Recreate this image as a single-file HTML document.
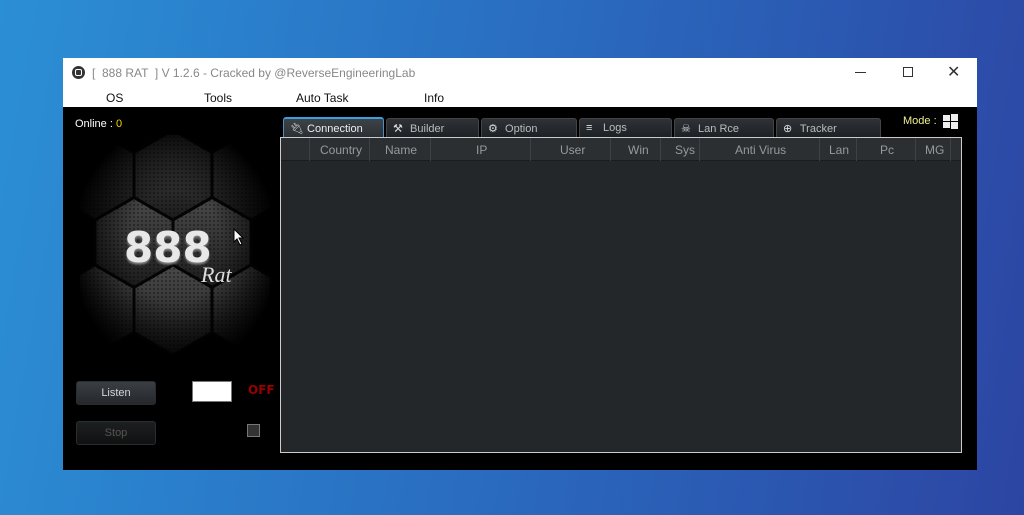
<!DOCTYPE html>
<html><head><meta charset="utf-8"><style>
*{margin:0;padding:0;box-sizing:border-box}
body{width:1024px;height:515px;overflow:hidden;background:linear-gradient(100deg,#2b8fd5 0%,#2a6cc0 50%,#2c45a3 100%);font-family:"Liberation Sans",sans-serif;position:relative}
.win{position:absolute;left:63px;top:58px;width:914px;height:412px;background:#000}
.title{position:absolute;left:0;top:0;width:914px;height:30px;background:#fff;font-size:12px;color:#888}
.menu{position:absolute;left:0;top:30px;width:914px;height:19px;background:#fff;font-size:12px;color:#111}
.menu span{position:absolute;top:3px}
.t{position:absolute;font-size:11px;color:#ddd;white-space:nowrap}
.tab{position:absolute;top:60px;height:20px;background:linear-gradient(#2e3337,#1d2023);border:1px solid #444;border-bottom:none;border-radius:3px 3px 0 0;font-size:11px;color:#bbb;padding:3px 0 0 6px}
.tab b{display:inline-block;width:14px;color:#ddd;font-weight:normal}
.frame{position:absolute;left:217px;top:79px;width:682px;height:316px;border:1px solid #ccc;background:#23272a}
.hdr{position:absolute;left:0;top:0;width:680px;height:23px;background:#2b2f32;border-bottom:1px solid #1a1c1e}
.hdr span{position:absolute;top:5px;font-size:12px;color:#999}
.sep{position:absolute;top:0;width:1px;height:23px;background:#3d4246}
.btn{position:absolute;width:80px;height:24px;border:1px solid #2a2d30;border-radius:3px;font-size:11px;text-align:center;line-height:22px}
</style></head><body>
<div class="win">
 <div class="title">
  <div style="position:absolute;left:9px;top:8px;width:13px;height:13px;border-radius:50%;background:#333"><div style="position:absolute;left:3px;top:3px;width:7px;height:7px;border:1.5px solid #fff;border-radius:2px"></div></div>
  <div style="position:absolute;left:29px;top:8px">[ &nbsp;888 RAT &nbsp;] V 1.2.6 - Cracked by @ReverseEngineeringLab</div>
  <div style="position:absolute;left:792px;top:14px;width:11px;height:1px;background:#333"></div>
  <div style="position:absolute;left:840px;top:9px;width:10px;height:10px;border:1px solid #333"></div>
  <div style="position:absolute;left:884px;top:4px;font-size:16px;color:#333">✕</div>
 </div>
 <div class="menu"><span style="left:43px">OS</span><span style="left:141px">Tools</span><span style="left:233px">Auto Task</span><span style="left:361px">Info</span></div>
 <div class="t" style="left:12px;top:60px;font-size:11px;color:#fff">Online : <span style="color:#f5d400">0</span></div>
 <div class="t" style="left:840px;top:57px;color:#f0f090">Mode :</div>
 <svg style="position:absolute;left:880px;top:56px" width="15" height="15"><rect x="0" y="1" width="7" height="6" fill="#eee"/><rect x="8" y="0" width="7" height="7" fill="#eee"/><rect x="0" y="8" width="7" height="6" fill="#eee"/><rect x="8" y="8" width="7" height="7" fill="#eee"/></svg>
 <!-- logo -->
 <div style="position:absolute;left:17px;top:77px;width:190px;height:225px;overflow:hidden;background:#000">
  <svg width="190" height="225" style="position:absolute;left:0;top:0">
   <defs>
    <linearGradient id="hg" x1="0" y1="0" x2="0" y2="1"><stop offset="0" stop-color="#4a4a4a"/><stop offset="1" stop-color="#1c1c1c"/></linearGradient>
    <radialGradient id="vg" cx="50%" cy="50%" r="55%"><stop offset="0.45" stop-color="#000" stop-opacity="0"/><stop offset="1" stop-color="#000" stop-opacity="1"/></radialGradient>
    <pattern id="dots" width="4" height="4" patternUnits="userSpaceOnUse"><circle cx="2" cy="2" r="0.9" fill="#000" opacity=".55"/></pattern>
   </defs>
   <g stroke="#050505" stroke-width="3" fill="url(#hg)">
    <path d="M93,-5 L132,17.5 L132,62.5 L93,85 L54,62.5 L54,17.5Z"/>
    <path d="M15,-5 L54,17.5 L54,62.5 L15,85 L-24,62.5 L-24,17.5Z"/>
    <path d="M171,-5 L210,17.5 L210,62.5 L171,85 L132,62.5 L132,17.5Z"/>
    <path d="M54,62.5 L93,85 L93,130 L54,152.5 L15,130 L15,85Z"/>
    <path d="M132,62.5 L171,85 L171,130 L132,152.5 L93,130 L93,85Z"/>
    <path d="M93,130 L132,152.5 L132,197.5 L93,220 L54,197.5 L54,152.5Z"/>
    <path d="M15,130 L54,152.5 L54,197.5 L15,220 L-24,197.5 L-24,152.5Z"/>
    <path d="M171,130 L210,152.5 L210,197.5 L171,220 L132,197.5 L132,152.5Z"/>
   </g>
   <rect width="190" height="225" fill="url(#dots)"/>
   <rect width="190" height="225" fill="url(#vg)"/>
  </svg>
  <div style="position:absolute;left:44px;top:88px;font-size:42px;font-weight:bold;color:#e8e8e8;letter-spacing:0px;text-shadow:0 2px 2px #888;font-family:'DejaVu Sans',sans-serif">888</div>
  <div style="position:absolute;left:121px;top:127px;font-size:22px;font-style:italic;color:#ddd;font-family:'Liberation Serif',serif">Rat</div>
 </div>
 <svg style="position:absolute;left:170px;top:170px" width="12" height="18"><path d="M1,1 L1,14 L4,11 L7,17 L9,16 L6,10 L10,10 Z" fill="#fff" stroke="#000" stroke-width="1"/></svg>
 <div class="btn" style="left:13px;top:323px;background:linear-gradient(#3a3f43,#25292c);color:#cfd6dc">Listen</div>
 <div class="btn" style="left:13px;top:363px;background:linear-gradient(#1c1f21,#111);color:#555">Stop</div>
 <div style="position:absolute;left:129px;top:323px;width:40px;height:21px;background:#fff;border:1px solid #777"></div>
 <div class="t" style="left:185px;top:325px;color:#9a0000;font-weight:bold;font-size:12px;font-family:'DejaVu Sans',sans-serif">OFF</div>
 <div style="position:absolute;left:184px;top:366px;width:13px;height:13px;border:1px solid #777;background:#333"></div>
 <!-- tabs -->
 <div class="tab" style="left:220px;width:101px;border-color:#4a90c0;border-top:2px solid #3aa0e0;background:linear-gradient(#3d4347,#2a2f33);color:#eee;top:59px;height:21px"><b>🔌︎</b> Connection</div>
 <div class="tab" style="left:323px;width:93px"><b>⚒</b> Builder</div>
 <div class="tab" style="left:418px;width:96px"><b>⚙</b> Option</div>
 <div class="tab" style="left:516px;width:93px"><b>≡</b> Logs</div>
 <div class="tab" style="left:611px;width:100px"><b>☠</b> Lan Rce</div>
 <div class="tab" style="left:713px;width:105px"><b>⊕</b> Tracker</div>
 <div class="frame"><div class="hdr">
  <div class="sep" style="left:28px"></div><div class="sep" style="left:88px"></div><div class="sep" style="left:149px"></div><div class="sep" style="left:249px"></div><div class="sep" style="left:329px"></div><div class="sep" style="left:379px"></div><div class="sep" style="left:418px"></div><div class="sep" style="left:538px"></div><div class="sep" style="left:575px"></div><div class="sep" style="left:634px"></div><div class="sep" style="left:669px"></div>
  <span style="left:39px">Country</span><span style="left:104px">Name</span><span style="left:195px">IP</span><span style="left:279px">User</span><span style="left:347px">Win</span><span style="left:394px">Sys</span><span style="left:454px">Anti Virus</span><span style="left:548px">Lan</span><span style="left:599px">Pc</span><span style="left:644px">MG</span>
 </div></div>
</div>
</body></html>
